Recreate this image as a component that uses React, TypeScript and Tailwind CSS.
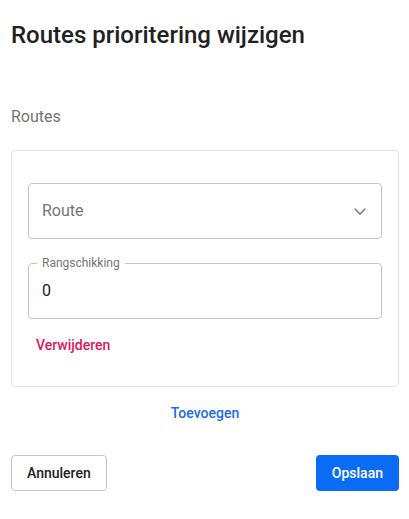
import React from "react";

function Chevron() {
  return (
    <svg width="12" height="7" viewBox="0 0 12 7" fill="none" className="shrink-0">
      <path d="M1 1l5 5 5-5" stroke="#6b6b6b" strokeWidth="1.3" strokeLinecap="round" strokeLinejoin="round" />
    </svg>
  );
}

export default function App() {
  return (
    <div className="w-[409px] min-h-[519px] bg-white pl-[11px] pr-[10px] pt-[19px] font-['Roboto',sans-serif] text-[#212121]">
      <h1 className="text-[24px] leading-[32px] font-medium">Routes prioritering wijzigen</h1>

      <div className="mt-[54px] text-[16px] leading-[24px] text-[#757575]">Routes</div>

      <div className="mt-[21px] rounded-[4px] border border-[#e0e0e0] px-4 pt-8 pb-[23px]">
        <div className="flex h-[56px] items-center justify-between rounded-[4px] border border-[#c4c4c4] pl-[13px] pr-[15px]">
          <span className="text-[16px] text-[#757575]">Route</span>
          <Chevron />
        </div>

        <div className="relative mt-6 flex h-[56px] items-center rounded-[4px] border border-[#c4c4c4] pl-[13px]">
          <span className="absolute left-[8px] top-[-9px] bg-white px-[5px] text-[12px] leading-[16px] text-[#757575]">
            Rangschikking
          </span>
          <span className="text-[16px] text-[#212121]">0</span>
        </div>

        <div className="mt-2 flex">
          <button type="button" className="h-9 px-2 text-[14px] font-medium text-[#e3125e]">
            Verwijderen
          </button>
        </div>
      </div>

      <div className="mt-2 flex justify-center">
        <button type="button" className="h-9 px-2 text-[14px] font-medium text-[#1b6be6]">
          Toevoegen
        </button>
      </div>

      <div className="mt-6 flex items-center justify-between">
        <button type="button" className="h-9 rounded-[4px] border border-[#c4c4c4] px-[15px] text-[14px] font-medium text-[#212121]">
          Annuleren
        </button>
        <button type="button" className="h-9 rounded-[4px] bg-[#0a6cf5] px-4 text-[14px] font-medium text-white">
          Opslaan
        </button>
      </div>
    </div>
  );
}
